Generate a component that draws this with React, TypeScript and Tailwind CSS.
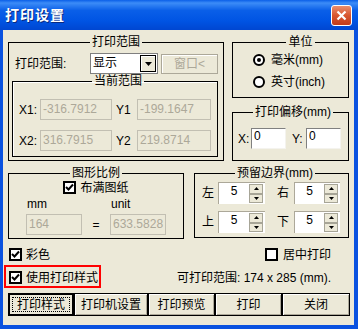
import type { ReactNode } from "react";

const font = "font-['Liberation_Sans','Noto_Sans_CJK_SC',sans-serif]";

function Group({ title, className, children }: { title: string; className?: string; children?: ReactNode }) {
  return (
    <fieldset className={`border border-black min-w-0 ${className ?? ""}`}>
      <legend className="mx-auto px-[2px] text-[12px] leading-[14px] text-black">{title}</legend>
      {children}
    </fieldset>
  );
}

function Radio({ checked, label }: { checked?: boolean; label: string }) {
  return (
    <div className="flex items-center h-[16px] gap-[6px]">
      <span className="w-[12px] h-[12px] rounded-full border-2 border-black bg-white flex items-center justify-center">
        {checked && <span className="w-[4px] h-[4px] rounded-full bg-black" />}
      </span>
      <span className="text-[12px] leading-[14px]">{label}</span>
    </div>
  );
}

function Check({ checked }: { checked?: boolean }) {
  return (
    <span className="w-[13px] h-[13px] border-2 border-black bg-white flex items-center justify-center shrink-0">
      {checked && (
        <svg width="9" height="9" viewBox="0 0 9 9">
          <path d="M1 4 L3.5 6.5 L8 1.5" stroke="black" strokeWidth="2" fill="none" />
        </svg>
      )}
    </span>
  );
}

function DisabledInput({ value, w }: { value: string; w: string }) {
  return (
    <div
      className={`${w} h-[21px] border border-[#C2BFB2] text-[#ACA899] text-[12px] leading-[14px] pl-[2px] pt-[2px] whitespace-nowrap overflow-hidden`}
    >
      {value}
    </div>
  );
}

function WhiteInput({ value }: { value: string }) {
  return (
    <div className="w-[35px] h-[21px] bg-white border-t border-l border-[#808080] border-b border-r border-b-[#F4F3EE] border-r-[#F4F3EE] text-[12px] leading-[14px] pl-[2px]">
      {value}
    </div>
  );
}

function SpinBtn({ up }: { up?: boolean }) {
  return (
    <div className="flex-1 bg-[#ECE9D8] border border-[#A7A597] flex items-center justify-center">
      <svg width="5" height="3" viewBox="0 0 5 3">
        {up ? <path d="M0 3 L2.5 0 L5 3 Z" fill="black" /> : <path d="M0 0 L2.5 3 L5 0 Z" fill="black" />}
      </svg>
    </div>
  );
}

function Spin({ w }: { w: string }) {
  return (
    <div className={`${w} h-[22px] flex bg-white border-t border-l border-[#ACA899]`}>
      <span className="flex-1 text-center text-[12px] leading-[14px] pt-[1px]">5</span>
      <div className="w-[14px] flex flex-col mr-[2px] my-[1px]">
        <SpinBtn up />
        <SpinBtn />
      </div>
    </div>
  );
}

function Btn({ label, w, def }: { label: string; w: string; def?: boolean }) {
  if (def) {
    return (
      <div className={`${w} h-[23px] border-2 border-black bg-[#ECE9D8] p-[2px] flex`}>
        <div className="flex-1 border border-dotted border-black flex items-center justify-center text-[12px]">
          {label}
        </div>
      </div>
    );
  }
  return (
    <div
      className={`${w} h-[23px] border border-black bg-[#ECE9D8] shadow-[inset_1px_1px_0_white,inset_-1px_-1px_0_#ACA899] flex items-center justify-center text-[12px]`}
    >
      {label}
    </div>
  );
}

export default function App() {
  return (
    <div className={`w-[358px] h-[329px] flex flex-col bg-[#0A52E0] ${font} text-black`}>
      <div className="h-[30px] flex items-center pl-[5px] pr-[6px] bg-[linear-gradient(to_bottom,#0A5FE8_0%,#3C8CF7_10%,#0A5FE8_35%,#0054E3_70%,#0046D1_100%)]">
        <span className="text-white font-bold text-[14px] tracking-[1px] [text-shadow:1px_1px_0_#0A2A80]">打印设置</span>
        <div className="ml-auto w-[21px] h-[21px] rounded-[3px] border border-white bg-[linear-gradient(to_bottom,#EA8E6E,#D8562F_50%,#C13B1B)] flex items-center justify-center">
          <svg width="11" height="11" viewBox="0 0 11 11">
            <path d="M1.5 1.5 L9.5 9.5 M9.5 1.5 L1.5 9.5" stroke="white" strokeWidth="2.2" />
          </svg>
        </div>
      </div>

      <div className="flex-1 ml-[3px] mr-[4px] mb-[4px] bg-[#ECE9D8] pt-[5px] pl-[5px] flex flex-col">
        {/* row 1 */}
        <div className="flex items-start">
          <Group title="打印范围" className="w-[216px] h-[126px] px-[3px]">
            <div className="flex items-center mt-[4px] h-[21px]">
              <span className="text-[12px] pl-[3px] w-[78px]">打印范围:</span>
              <div className="w-[68px] h-[21px] bg-white border border-[#7F7F7F] flex">
                <span className="flex-1 text-[12px] leading-[19px] pl-[2px]">显示</span>
                <div className="w-[16px] m-[1px] bg-[#ECE9D8] border border-black shadow-[inset_1px_1px_0_white] flex items-center justify-center">
                  <svg width="7" height="4" viewBox="0 0 7 4">
                    <path d="M0 0 L3.5 4 L7 0 Z" fill="black" />
                  </svg>
                </div>
              </div>
              <div className="ml-[3px] w-[57px] h-[20px] border border-[#ACA899] shadow-[inset_1px_1px_0_white] flex items-center justify-center text-[12px] text-[#ACA899]">
                窗口&lt;
              </div>
            </div>
            <Group title="当前范围" className="w-[206px] h-[83px] pl-[6px] shadow-[inset_1px_1px_0_white]">
              <div className="flex items-center mt-[11px]">
                <span className="w-[21px] text-[12px]">X1:</span>
                <DisabledInput value="-316.7912" w="w-[72px]" />
                <span className="w-[25px] pl-[4px] text-[12px]">Y1</span>
                <DisabledInput value="-199.1647" w="w-[74px]" />
              </div>
              <div className="flex items-center mt-[10px]">
                <span className="w-[21px] text-[12px]">X2:</span>
                <DisabledInput value="316.7915" w="w-[72px]" />
                <span className="w-[25px] pl-[4px] text-[12px]">Y2</span>
                <DisabledInput value="219.8714" w="w-[74px]" />
              </div>
            </Group>
          </Group>

          <div className="ml-[8px] w-[117px] flex flex-col">
            <Group title="单位" className="h-[63px] pl-[20px] flex flex-col">
              <div className="mt-[3px] flex flex-col gap-[6px]">
                <Radio checked label="毫米(mm)" />
                <Radio label="英寸(inch)" />
              </div>
            </Group>
            <Group title="打印偏移(mm)" className="mt-[7px] h-[56px] pl-[5px]">
              <div className="flex items-center mt-[9px]">
                <span className="w-[13px] text-[12px]">X:</span>
                <WhiteInput value="0" />
                <span className="ml-[6px] w-[14px] text-[12px]">Y:</span>
                <WhiteInput value="0" />
              </div>
            </Group>
          </div>
        </div>

        {/* row 2 */}
        <div className="flex items-start mt-[5px]">
          <Group title="图形比例" className="w-[176px] h-[73px]">
            <div className="flex items-center justify-center gap-[4px] mt-[1px] h-[13px]">
              <Check checked />
              <span className="text-[12px] leading-[14px]">布满图纸</span>
            </div>
            <div className="flex text-[12px] leading-[14px] mt-[3px] pl-[18px]">
              <span className="w-[84px]">mm</span>
              <span>unit</span>
            </div>
            <div className="flex items-center mt-[3px] pl-[17px]">
              <DisabledInput value="164" w="w-[56px]" />
              <span className="w-[28px] text-center text-[12px]">=</span>
              <DisabledInput value="633.5828" w="w-[56px]" />
            </div>
          </Group>
          <Group title="预留边界(mm)" className="ml-[10px] w-[155px] h-[72px] pl-[7px]">
            <div className="flex flex-col gap-[7px] mt-[2px]">
              <div className="flex items-center">
                <span className="w-[16px] text-[12px]">左</span>
                <Spin w="w-[47px]" />
                <span className="ml-[12px] w-[17px] text-[12px]">右</span>
                <Spin w="w-[46px]" />
              </div>
              <div className="flex items-center">
                <span className="w-[16px] text-[12px]">上</span>
                <Spin w="w-[47px]" />
                <span className="ml-[12px] w-[17px] text-[12px]">下</span>
                <Spin w="w-[46px]" />
              </div>
            </div>
          </Group>
        </div>

        {/* row 3 */}
        <div className="flex items-center h-[13px] mt-[9px] pl-[1px]">
          <Check checked />
          <span className="ml-[4px] text-[12px]">彩色</span>
          <div className="ml-[215px] flex items-center">
            <Check />
            <span className="ml-[5px] text-[12px]">居中打印</span>
          </div>
        </div>

        {/* row 4 */}
        <div className="flex items-center mt-[4px] -ml-[4px]">
          <div className="w-[97px] h-[23px] border-2 border-[#FF0000] flex items-center pl-[3px] pt-[2px]">
            <Check checked />
            <span className="ml-[4px] text-[12px]">使用打印样式</span>
          </div>
          <span className="ml-[76px] text-[12px] pt-[2px] whitespace-nowrap">可打印范围: 174 x 285 (mm).</span>
        </div>

        {/* buttons */}
        <div className="flex mt-[5px]">
          <Btn def label="打印样式" w="w-[66px]" />
          <Btn label="打印机设置" w="w-[74px]" />
          <Btn label="打印预览" w="w-[67px]" />
          <Btn label="打印" w="w-[67px]" />
          <Btn label="关闭" w="w-[68px]" />
        </div>
      </div>
    </div>
  );
}
